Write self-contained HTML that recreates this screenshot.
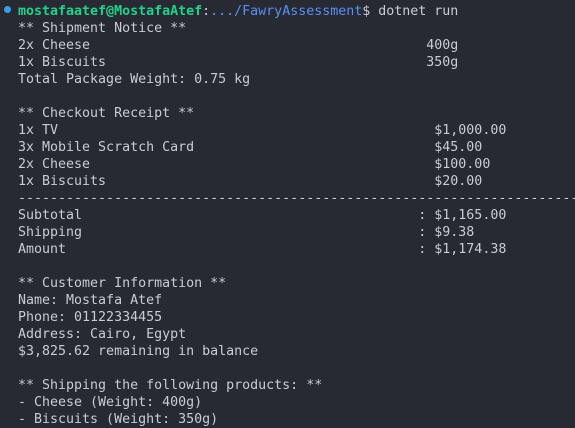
<html><head><style>
body{margin:0;background:#272a33;width:575px;height:426px;overflow:hidden}
pre{margin:0;position:absolute;left:18px;top:3px;font-family:"DejaVu Sans Mono","Liberation Mono",monospace;font-size:13.3px;line-height:17px;color:#c9ccd1;white-space:pre}
.g{color:#23d18b;font-weight:bold}.b{color:#5b8ff0}
.dot{position:absolute;left:4px;top:6px;width:7px;height:7px;border-radius:50%;background:#3a9ee8}
</style></head><body><div class="dot"></div><pre><span class="g">mostafaatef@MostafaAtef</span>:<span class="b">.../FawryAssessment</span>$ dotnet run
** Shipment Notice **
2x Cheese                                          400g
1x Biscuits                                        350g
Total Package Weight: 0.75 kg

** Checkout Receipt **
1x TV                                               $1,000.00
3x Mobile Scratch Card                              $45.00
2x Cheese                                           $100.00
1x Biscuits                                         $20.00
----------------------------------------------------------------------
Subtotal                                          : $1,165.00
Shipping                                          : $9.38
Amount                                            : $1,174.38

** Customer Information **
Name: Mostafa Atef
Phone: 01122334455
Address: Cairo, Egypt
$3,825.62 remaining in balance

** Shipping the following products: **
- Cheese (Weight: 400g)
- Biscuits (Weight: 350g)</pre></body></html>
